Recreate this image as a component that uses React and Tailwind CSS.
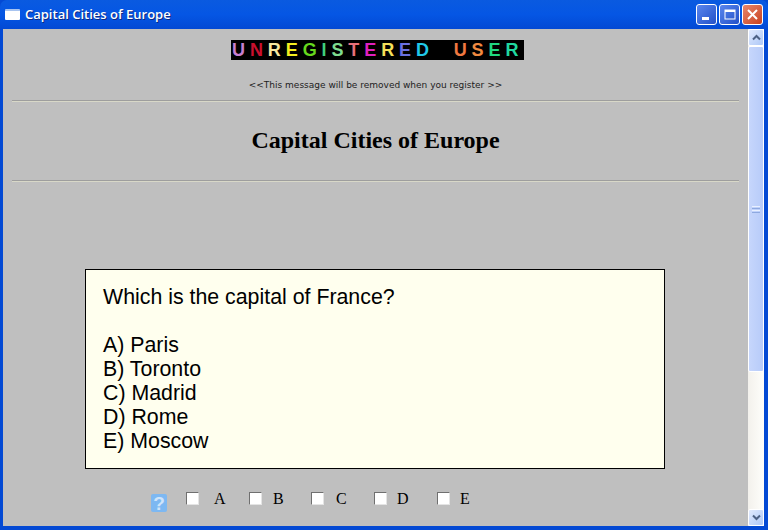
const BANNER = [
  { ch: 'U', color: 'text-[#c77fd0]' },
  { ch: 'N', color: 'text-[#c8102e]' },
  { ch: 'R', color: 'text-[#f7e7a0]' },
  { ch: 'E', color: 'text-[#f5ee20]' },
  { ch: 'G', color: 'text-[#66d81e]' },
  { ch: 'I', color: 'text-[#3fd07a]' },
  { ch: 'S', color: 'text-[#7fdc8f]' },
  { ch: 'T', color: 'text-[#e8707a]' },
  { ch: 'E', color: 'text-[#e020c0]' },
  { ch: 'R', color: 'text-[#f5e05a]' },
  { ch: 'E', color: 'text-[#6a70e0]' },
  { ch: 'D', color: 'text-[#20c8e8]' },
  { ch: '\u00a0', color: 'text-black' },
  { ch: '\u00a0', color: 'text-black' },
  { ch: 'U', color: 'text-[#f07840]' },
  { ch: 'S', color: 'text-[#f08a40]' },
  { ch: 'E', color: 'text-[#20d880]' },
  { ch: 'R', color: 'text-[#20d8a0]' },
]

const ANSWERS = [
  { label: 'A', box: 'ml-[19px]', text: 'ml-[15px] w-[35px]' },
  { label: 'B', box: '', text: 'ml-[11px] w-[38px]' },
  { label: 'C', box: '', text: 'ml-[12px] w-[38px]' },
  { label: 'D', box: '', text: 'ml-[10px] w-[40px]' },
  { label: 'E', box: '', text: 'ml-[10px] w-[30px]' },
]

const CheckBox = ({ className = '' }) => (
  <span
    className={`block w-[13px] h-[13px] shrink-0 bg-white border border-t-[#6f6f6f] border-l-[#6f6f6f] border-r-[#e4e4e4] border-b-[#e4e4e4] ${className}`}
  />
)

const CaptionButton = ({ className = '', children }) => (
  <div
    className={`w-[21px] h-[21px] rounded-[3px] border border-white flex items-center justify-center ${className}`}
  >
    <svg width="15" height="15" viewBox="0 0 15 15">
      {children}
    </svg>
  </div>
)

const ScrollButton = ({ d }) => (
  <div className="h-[17px] rounded-[2px] border border-white bg-gradient-to-br from-[#e1eafe] to-[#aec8f7] flex items-center justify-center">
    <svg width="9" height="7" viewBox="0 0 9 7">
      <path d={d} fill="none" stroke="#4d6185" strokeWidth="2" />
    </svg>
  </div>
)

const TitleBar = () => (
  <div className="h-[29px] shrink-0 pl-[5px] pr-[5px] flex items-center rounded-t-[7px] bg-gradient-to-b from-[#0a5ae0] via-[#0556e4] to-[#0349d4]">
    <div className="w-[15px] h-[11px] bg-white rounded-[1px] border-t-2 border-[#a8c4f0]" />
    <span className="ml-[5px] text-white text-[13px] font-semibold font-['Open_Sans',sans-serif] [text-shadow:1px_1px_#0f2a80]">
      Capital Cities of Europe
    </span>
    <div className="ml-auto flex gap-[2px]">
      <CaptionButton className="bg-gradient-to-br from-[#5a86ee] to-[#2350c8]">
        <rect x="3" y="10" width="7" height="3" fill="#fff" />
      </CaptionButton>
      <CaptionButton className="bg-gradient-to-br from-[#5a86ee] to-[#2350c8]">
        <rect x="3" y="3" width="10" height="9" fill="none" stroke="#fff" strokeWidth="1" />
        <rect x="3" y="3" width="10" height="2" fill="#fff" />
      </CaptionButton>
      <CaptionButton className="bg-gradient-to-br from-[#e8866a] to-[#c8401c]">
        <path d="M3 3 L12 12 M12 3 L3 12" stroke="#fff" strokeWidth="2" />
      </CaptionButton>
    </div>
  </div>
)

const ScrollBar = () => (
  <div className="w-[16px] shrink-0 flex flex-col bg-gradient-to-r from-[#f3f1ec] to-[#fefefb]">
    <ScrollButton d="M1 5.5 L4.5 2 L8 5.5" />
    <div className="h-[326px] rounded-[2px] border border-white bg-gradient-to-r from-[#c6d6fc] to-[#b7cbf9] flex items-center justify-center">
      <div className="w-[8px] flex flex-col gap-[1px]">
        <div className="h-px bg-[#e8f0ff]" />
        <div className="h-px bg-[#8ea9e0]" />
        <div className="h-px bg-[#e8f0ff]" />
        <div className="h-px bg-[#8ea9e0]" />
      </div>
    </div>
    <div className="flex-1" />
    <ScrollButton d="M1 1.5 L4.5 5 L8 1.5" />
  </div>
)

const App = () => {
  return (
    <div className="w-[768px] h-[530px] flex flex-col overflow-hidden bg-[#0349d4]">
      <TitleBar />
      <div className="flex-1 min-h-0 flex pl-[3px] pr-[4px] pb-[4px]">
        <div className="flex-1 min-w-0 bg-[#bfbfbf] pt-[11px] px-[9px] font-['Liberation_Serif',serif] text-black">
          <div className="flex justify-center pl-[4px]">
            <div className="w-[293px] h-[20px] pl-[1px] bg-black flex items-center whitespace-nowrap overflow-hidden font-['Liberation_Sans',sans-serif] font-bold text-[18px] tracking-[4.9px] leading-none">
              {BANNER.map((item, i) => (
                <span key={i} className={item.color}>
                  {item.ch}
                </span>
              ))}
            </div>
          </div>
          <p className="mt-[18px] h-[14px] leading-[14px] text-center text-[9px] text-[#222] font-['DejaVu_Sans',sans-serif]">
            {'<<This message will be removed when you register >>'}
          </p>
          <div className="mt-[8px] h-[2px] border-t border-[#9e9e9e] bg-[#d8d8c8]" />
          <h1 className="h-[78px] pb-[2px] flex items-center justify-center font-bold text-[24px]">
            Capital Cities of Europe
          </h1>
          <div className="h-[2px] border-t border-[#9e9e9e] bg-[#d8d8c8]" />

          <div className="mt-[87px] ml-[73px] mr-[74px] h-[200px] bg-[#ffffee] border border-black pl-[17px] pt-[15px] font-['Liberation_Sans',sans-serif] text-[21.33px] leading-[24px]">
            <p>Which is the capital of France?</p>
            <p className="mt-[24px]">A) Paris</p>
            <p>B) Toronto</p>
            <p>C) Madrid</p>
            <p>D) Rome</p>
            <p>E) Moscow</p>
          </div>

          <div className="mt-[24px] ml-[139px] flex items-start text-[16px] leading-[18px]">
            <div className="w-[16px] h-[18px] mt-[1px] rounded-[2px] bg-[#7db8f2] flex items-center justify-center text-[#cfe4fa] font-bold text-[19px] leading-none font-['Liberation_Sans',sans-serif]">
              ?
            </div>
            {ANSWERS.map((a) => (
              <div key={a.label} className="flex items-start -mt-[1px]">
                <CheckBox className={a.box} />
                <span className={`${a.text} -mt-[2px]`}>{a.label}</span>
              </div>
            ))}
          </div>
        </div>
        <ScrollBar />
      </div>
    </div>
  )
}

export default App
